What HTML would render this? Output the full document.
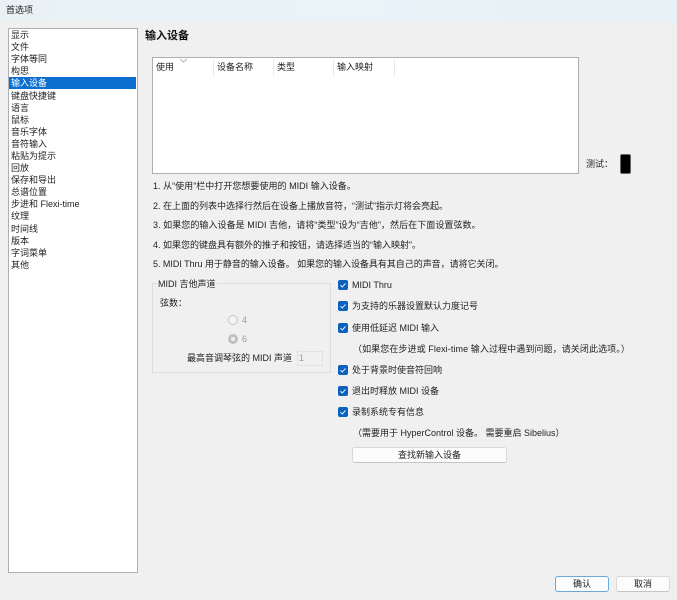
<!DOCTYPE html>
<html lang="zh-CN"><head><meta charset="utf-8"><title>首选项</title>
<style>
html,body{margin:0;padding:0;width:677px;height:600px;overflow:hidden;background:#f0f0f0}
body{position:relative;font-family:"Liberation Sans","Noto Sans CJK SC",sans-serif;font-size:9px;color:#222}
#w{position:absolute;left:0;top:0;width:677px;height:600px;background:#f0f0f0;filter:blur(.25px)}
.t{position:absolute;white-space:nowrap;line-height:12px;height:12px}
.b{position:absolute;box-sizing:border-box}
.cb{position:absolute;left:338px;width:10px;height:10px;background:#0b62bd;border-radius:2px}
.cb svg{position:absolute;left:0;top:0}
.s{position:absolute;top:59px;width:1px;height:17px;background:#e9e9e9}
.btn{position:absolute;box-sizing:border-box;background:#fcfcfc;border:1px solid #d9d9d9;border-bottom-color:#c4c4c4;border-radius:3px;text-align:center;line-height:14px}
</style></head><body><div id="w">
<div class="b" style="left:0;top:0;width:677px;height:22px;background:linear-gradient(90deg,#e9f1f4,#e9f3f8 50%,#e8f1f5)"></div>
<div class="t" style="left:6px;top:4px">首选项</div>

<div class="b" style="left:8px;top:28px;width:130px;height:545px;background:#fff;border:1px solid #aeaeb4"></div>
<div class="b" style="left:9px;top:77px;width:127px;height:12px;background:#0c6fd0"></div>
<div class="t" style="left:11px;top:29px">显示</div>
<div class="t" style="left:11px;top:41px">文件</div>
<div class="t" style="left:11px;top:53px">字体等同</div>
<div class="t" style="left:11px;top:65px">构思</div>
<div class="t" style="left:11px;top:77px;color:#fff">输入设备</div>
<div class="t" style="left:11px;top:90px">键盘快捷键</div>
<div class="t" style="left:11px;top:102px">语言</div>
<div class="t" style="left:11px;top:114px">鼠标</div>
<div class="t" style="left:11px;top:126px">音乐字体</div>
<div class="t" style="left:11px;top:138px">音符输入</div>
<div class="t" style="left:11px;top:150px">粘贴为提示</div>
<div class="t" style="left:11px;top:162px">回放</div>
<div class="t" style="left:11px;top:174px">保存和导出</div>
<div class="t" style="left:11px;top:186px">总谱位置</div>
<div class="t" style="left:11px;top:198px">步进和 Flexi-time</div>
<div class="t" style="left:11px;top:210px">纹理</div>
<div class="t" style="left:11px;top:223px">时间线</div>
<div class="t" style="left:11px;top:235px">版本</div>
<div class="t" style="left:11px;top:247px">字词菜单</div>
<div class="t" style="left:11px;top:259px">其他</div>

<div class="t" style="left:145px;top:30px;font-weight:bold;font-size:11px;color:#111">输入设备</div>

<div class="b" style="left:152px;top:57px;width:427px;height:117px;background:#fff;border:1px solid #aeaeae"></div>
<svg style="position:absolute;left:179px;top:58px" width="9" height="5"><path d="M1 1l3.5 3L8 1" fill="none" stroke="#9a9a9a" stroke-width=".8"/></svg>
<div class="t" style="left:156px;top:61px">使用</div>
<div class="s" style="left:213px"></div>
<div class="t" style="left:217px;top:61px">设备名称</div>
<div class="s" style="left:273px"></div>
<div class="t" style="left:277px;top:61px">类型</div>
<div class="s" style="left:333px"></div>
<div class="t" style="left:337px;top:61px">输入映射</div>
<div class="s" style="left:394px"></div>

<div class="t" style="left:586px;top:158px">测试：</div>
<div class="b" style="left:620px;top:154px;width:11px;height:20px;background:#000;border:1px solid #666;border-radius:2px"></div>

<div class="t" style="left:153px;top:180px;letter-spacing:.03px">1. 从“使用”栏中打开您想要使用的 MIDI 输入设备。</div>
<div class="t" style="left:153px;top:200px">2. 在上面的列表中选择行然后在设备上播放音符，“测试”指示灯将会亮起。</div>
<div class="t" style="left:153px;top:219px;letter-spacing:.06px">3. 如果您的输入设备是 MIDI 吉他，请将“类型”设为“吉他”，然后在下面设置弦数。</div>
<div class="t" style="left:153px;top:239px">4. 如果您的键盘具有额外的推子和按钮，请选择适当的“输入映射”。</div>
<div class="t" style="left:153px;top:258px;letter-spacing:-.03px">5. MIDI Thru 用于静音的输入设备。 如果您的输入设备具有其自己的声音，请将它关闭。</div>

<div class="b" style="left:152px;top:283px;width:179px;height:90px;border:1px solid #dcdcdc"></div>
<div class="t" style="left:157px;top:278px;background:#f0f0f0;padding:0 1px">MIDI 吉他声道</div>
<div class="t" style="left:160px;top:297px">弦数：</div>
<div class="b" style="left:228px;top:315px;width:10px;height:10px;border-radius:50%;border:1px solid #c4c4c4;background:#f4f4f4"></div>
<div class="t" style="left:242px;top:314px;color:#9c9c9c">4</div>
<div class="b" style="left:228px;top:334px;width:10px;height:10px;border-radius:50%;background:#c0c0c0"></div>
<div class="b" style="left:231px;top:337px;width:4px;height:4px;border-radius:50%;background:#f0f0f0"></div>
<div class="t" style="left:242px;top:333px;color:#9c9c9c">6</div>
<div class="t" style="left:187px;top:352px">最高音调琴弦的 MIDI 声道</div>
<div class="b" style="left:297px;top:351px;width:26px;height:15px;border:1px solid #e2e2e2;background:#f0f0f0"></div>
<div class="t" style="left:299px;top:352px;color:#9c9c9c">1</div>

<div class="cb" style="top:280px"><svg width="10" height="10"><path d="M2.5 5.2l1.8 1.8 3.2-3.6" fill="none" stroke="#fff" stroke-width=".9"/></svg></div>
<div class="t" style="left:352px;top:279px">MIDI Thru</div>
<div class="cb" style="top:301px"><svg width="10" height="10"><path d="M2.5 5.2l1.8 1.8 3.2-3.6" fill="none" stroke="#fff" stroke-width=".9"/></svg></div>
<div class="t" style="left:352px;top:300px">为支持的乐器设置默认力度记号</div>
<div class="cb" style="top:323px"><svg width="10" height="10"><path d="M2.5 5.2l1.8 1.8 3.2-3.6" fill="none" stroke="#fff" stroke-width=".9"/></svg></div>
<div class="t" style="left:352px;top:322px">使用低延迟 MIDI 输入</div>
<div class="t" style="left:353px;top:343px;letter-spacing:.09px">（如果您在步进或 Flexi-time 输入过程中遇到问题，请关闭此选项。）</div>
<div class="cb" style="top:365px"><svg width="10" height="10"><path d="M2.5 5.2l1.8 1.8 3.2-3.6" fill="none" stroke="#fff" stroke-width=".9"/></svg></div>
<div class="t" style="left:352px;top:364px">处于背景时使音符回响</div>
<div class="cb" style="top:386px"><svg width="10" height="10"><path d="M2.5 5.2l1.8 1.8 3.2-3.6" fill="none" stroke="#fff" stroke-width=".9"/></svg></div>
<div class="t" style="left:352px;top:385px">退出时释放 MIDI 设备</div>
<div class="cb" style="top:407px"><svg width="10" height="10"><path d="M2.5 5.2l1.8 1.8 3.2-3.6" fill="none" stroke="#fff" stroke-width=".9"/></svg></div>
<div class="t" style="left:352px;top:406px">录制系统专有信息</div>
<div class="t" style="left:353px;top:427px">（需要用于 HyperControl 设备。 需要重启 Sibelius）</div>

<div class="btn" style="left:352px;top:447px;width:155px;height:16px">查找新输入设备</div>
<div class="btn" style="left:555px;top:576px;width:54px;height:16px;border:1px solid #6aa9dc">确认</div>
<div class="btn" style="left:616px;top:576px;width:54px;height:16px">取消</div>
</div></body></html>
